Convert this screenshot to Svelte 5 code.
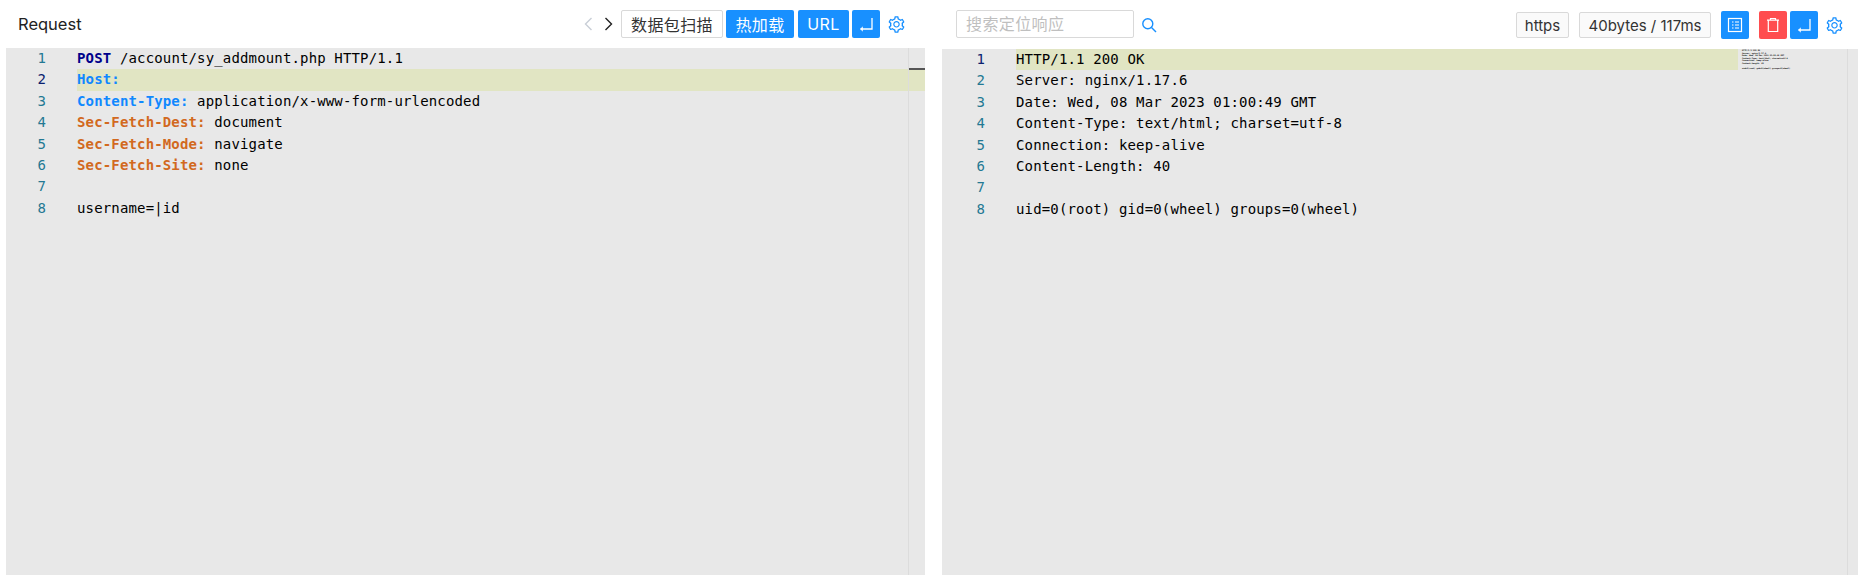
<script>
	const reqLines = [
		[['method', 'POST'], ['', ' /account/sy_addmount.php HTTP/1.1']],
		[['key', 'Host:']],
		[['key', 'Content-Type:'], ['', ' application/x-www-form-urlencoded']],
		[['sec', 'Sec-Fetch-Dest:'], ['', ' document']],
		[['sec', 'Sec-Fetch-Mode:'], ['', ' navigate']],
		[['sec', 'Sec-Fetch-Site:'], ['', ' none']],
		[],
		[['', 'username=|id']]
	];
	const resLines = [
		'HTTP/1.1 200 OK',
		'Server: nginx/1.17.6',
		'Date: Wed, 08 Mar 2023 01:00:49 GMT',
		'Content-Type: text/html; charset=utf-8',
		'Connection: keep-alive',
		'Content-Length: 40',
		'',
		'uid=0(root) gid=0(wheel) groups=0(wheel)'
	];
</script>

{#snippet enterIcon()}
	<svg class="ico" viewBox="0 0 16 16" width="16" height="16" fill="none" stroke="#fff" stroke-width="1.3">
		<path d="M14 2V13H2.5" />
		<path d="M4.8 10.8L2.5 13L4.8 15.2" fill="#fff" stroke-width="0.6" />
	</svg>
{/snippet}

{#snippet gearIcon()}
	<svg viewBox="0 0 1024 1024" width="19" height="19" fill="#1890ff">
		<path d="M924.8 625.7l-65.5-56c3.1-19 4.7-38.4 4.7-57.8s-1.6-38.8-4.7-57.8l65.5-56a32.03 32.03 0 0 0 9.3-35.2l-.9-2.6a443.74 443.74 0 0 0-79.7-137.9l-1.8-2.1a32.12 32.12 0 0 0-35.1-9.5l-81.3 28.9c-30-24.6-63.5-44-99.7-57.6l-15.7-85a32.05 32.05 0 0 0-25.8-25.7l-2.7-.5c-52.1-9.4-106.9-9.4-159 0l-2.7.5a32.05 32.05 0 0 0-25.8 25.7l-15.8 85.4a351.86 351.86 0 0 0-99 57.4l-81.9-29.1a32 32 0 0 0-35.1 9.5l-1.8 2.1a446.02 446.02 0 0 0-79.7 137.9l-.9 2.6c-4.5 12.5-.8 26.5 9.3 35.2l66.3 56.6c-3.1 18.8-4.6 38-4.6 57.1 0 19.2 1.5 38.4 4.6 57.1L99 625.5a32.03 32.03 0 0 0-9.3 35.2l.9 2.6c18.1 50.4 44.9 96.9 79.7 137.9l1.8 2.1a32.12 32.12 0 0 0 35.1 9.5l81.9-29.1c29.8 24.5 63.1 43.9 99 57.4l15.8 85.4a32.05 32.05 0 0 0 25.8 25.7l2.7.5a449.4 449.4 0 0 0 159 0l2.7-.5a32.05 32.05 0 0 0 25.8-25.7l15.7-85a350 350 0 0 0 99.7-57.6l81.3 28.9a32 32 0 0 0 35.1-9.5l1.8-2.1c34.8-41.1 61.6-87.5 79.7-137.9l.9-2.6c4.5-12.3.8-26.3-9.3-35zM788.3 465.9c2.5 15.1 3.8 30.6 3.8 46.1s-1.3 31-3.8 46.1l-6.6 40.1 74.7 63.9a370.03 370.03 0 0 1-42.6 73.6L721 702.8l-31.4 25.8c-23.9 19.6-50.5 35-79.3 45.8l-38.1 14.3-17.9 97a377.5 377.5 0 0 1-85 0l-17.9-97.2-37.8-14.5c-28.5-10.8-55-26.2-78.7-45.7l-31.4-25.9-93.4 33.2c-17-22.9-31.2-47.6-42.6-73.6l75.5-64.5-6.5-40c-2.4-14.9-3.7-30.3-3.7-45.5 0-15.3 1.2-30.6 3.7-45.5l6.5-40-75.5-64.5c11.3-26.1 25.6-50.7 42.6-73.6l93.4 33.2 31.4-25.9c23.7-19.5 50.2-34.9 78.7-45.7l37.9-14.3 17.9-97.2c28.1-3.2 56.8-3.2 85 0l17.9 97 38.1 14.3c28.7 10.8 55.4 26.2 79.3 45.8l31.4 25.8 92.8-32.9c17 22.9 31.2 47.6 42.6 73.6L781.8 426l6.5 39.9zM512 326c-97.2 0-176 78.8-176 176s78.8 176 176 176 176-78.8 176-176-78.8-176-176-176zm79.2 255.2A111.6 111.6 0 0 1 512 614c-29.9 0-58-11.7-79.2-32.8A111.6 111.6 0 0 1 400 502c0-29.9 11.7-58 32.8-79.2C454 401.6 482.1 390 512 390c29.9 0 58 11.6 79.2 32.8A111.6 111.6 0 0 1 624 502c0 29.9-11.7 58-32.8 79.2z" />
	</svg>
{/snippet}

<div class="page">
	<section class="panel">
		<header class="bar">
			<span class="title">Request</span>
			<div class="tools">
				<svg class="chev" viewBox="0 0 12 16" width="12" height="16" fill="none" stroke="#c9ced6" stroke-width="1.4"><path d="M9.5 2L3.5 8L9.5 14" /></svg>
				<svg class="chev next" viewBox="0 0 12 16" width="12" height="16" fill="none" stroke="#222" stroke-width="1.4"><path d="M2.5 2L8.5 8L2.5 14" /></svg>
				<button class="btn plain scan">数据包扫描</button>
				<button class="btn primary hot">热加载</button>
				<button class="btn primary url">URL</button>
				<button class="btn primary square">{@render enterIcon()}</button>
				<span class="gear">{@render gearIcon()}</span>
			</div>
		</header>
		<div class="editor">
			<div class="gutter">
				{#each reqLines as _, i}
					<div class="num" class:active={i === 1}>{i + 1}</div>
				{/each}
			</div>
			<div class="code">
				{#each reqLines as line, i}
					<div class="line" class:hl={i === 1}>{#each line as part}<span class={part[0]}>{part[1]}</span>{/each}</div>
				{/each}
			</div>
			<div class="ruler"><i class="mark"></i></div>
		</div>
	</section>

	<section class="panel right">
		<header class="bar">
			<div class="search">
				<input class="input" placeholder="搜索定位响应" />
				<svg class="lens" viewBox="0 0 16 16" width="16" height="16" fill="none" stroke="#1890ff" stroke-width="1.4"><circle cx="6.8" cy="6.8" r="5" /><path d="M10.5 10.5L15 15" /></svg>
			</div>
			<div class="tools">
				<span class="tag https">https</span>
				<span class="tag size">40bytes / 117ms</span>
				<button class="btn primary square list">
					<svg class="ico" viewBox="0 0 16 16" width="16" height="16" fill="none" stroke="#fff" stroke-width="1.2">
						<rect x="1.5" y="1.5" width="13" height="13" />
						<path d="M5 5H6.5M8 5H12M5 8H6.5M8 8H12M5 11H6.5M8 11H12" />
					</svg>
				</button>
				<button class="btn danger square">
					<svg class="ico" viewBox="0 0 16 16" width="16" height="16" fill="none" stroke="#fff" stroke-width="1.2">
						<path d="M2 3.2H14M5.5 3.2V1.5H10.5V3.2M3.3 3.2V14.5H12.7V3.2" />
					</svg>
				</button>
				<button class="btn primary square">{@render enterIcon()}</button>
				<span class="gear">{@render gearIcon()}</span>
			</div>
		</header>
		<div class="editor">
			<div class="gutter">
				{#each resLines as _, i}
					<div class="num" class:active={i === 0}>{i + 1}</div>
				{/each}
			</div>
			<div class="code">
				{#each resLines as line, i}
					<div class="line" class:hl={i === 0}>{line}</div>
				{/each}
			</div>
			<div class="minimap">
				{#each resLines as line}
					<div class="mini">{line}</div>
				{/each}
			</div>
			<div class="ruler thin"></div>
		</div>
	</section>
</div>

<style>
	:global(body) {
		margin: 0;
		background: #fff;
	}
	.page {
		display: flex;
		height: 585px;
		padding: 0 6px 10px;
		box-sizing: border-box;
		gap: 17px;
		font-family: Inter, "Noto Sans CJK SC", sans-serif;
	}
	.panel {
		flex: 0 0 919px;
		display: flex;
		flex-direction: column;
		min-width: 0;
	}
	.panel.right {
		flex: 0 0 916px;
	}
	.bar {
		height: 48px;
		flex: none;
		display: flex;
		align-items: center;
		justify-content: space-between;
		box-sizing: border-box;
	}
	.right .bar {
		height: 49px;
		padding-top: 1px;
	}
	.title {
		font-size: 16.5px;
		color: #222;
		margin-left: 12px;
	}
	.tools {
		display: flex;
		align-items: center;
		gap: 3px;
	}
	.chev {
		margin-right: 6px;
	}
	.chev.next {
		margin-right: 3px;
	}
	.btn {
		height: 28px;
		box-sizing: border-box;
		border-radius: 2px;
		border: 1px solid transparent;
		padding: 0;
		font-family: inherit;
		font-size: 16px;
		letter-spacing: 0.4px;
		display: inline-flex;
		align-items: center;
		justify-content: center;
	}
	.plain {
		background: #fff;
		border-color: #d9d9d9;
		color: #333;
	}
	.primary {
		background: #1890ff;
		color: #fff;
	}
	.danger {
		background: #ff4d4f;
		color: #fff;
	}
	.scan {
		width: 102px;
	}
	.hot {
		width: 68px;
	}
	.url {
		width: 51px;
		margin-left: 1px;
	}
	.square {
		width: 28px;
	}
	.gear {
		display: inline-flex;
		margin: 0 19px 0 4px;
	}
	.right .gear {
		margin-right: 14px;
	}
	.search {
		display: flex;
		align-items: center;
		gap: 7px;
		margin-left: 14px;
	}
	.input {
		width: 178px;
		height: 28px;
		margin-bottom: 2px;
		box-sizing: border-box;
		border: 1px solid #d9d9d9;
		border-radius: 2px;
		padding: 0 9px;
		font-family: inherit;
		font-size: 16px;
		letter-spacing: 0.4px;
		outline: none;
	}
	.input::placeholder {
		color: #bfbfbf;
	}
	.tag {
		height: 26px;
		box-sizing: border-box;
		border: 1px solid #d9d9d9;
		border-radius: 2px;
		background: #fafafa;
		color: #333;
		font-size: 15px;
		display: inline-flex;
		align-items: center;
		justify-content: center;
	}
	.https {
		width: 53px;
		margin-right: 7px;
	}
	.size {
		width: 132px;
		margin-right: 7px;
	}
	.list {
		margin-right: 7px;
	}
	.editor {
		flex: 1;
		display: flex;
		background: #e8e8e8;
		font-family: "DejaVu Sans Mono", monospace;
		font-size: 14px;
		letter-spacing: 0.15px;
		line-height: 21.4px;
		white-space: pre;
		overflow: hidden;
		position: relative;
	}
	.gutter {
		flex: none;
		width: 71px;
	}
	.right .gutter {
		width: 74px;
	}
	.num {
		width: 40px;
		text-align: right;
		color: #237893;
		height: 21.4px;
	}
	.right .num {
		width: 43px;
	}
	.num.active {
		color: #0b216f;
	}
	.code {
		flex: 1;
		min-width: 0;
		color: #000;
	}
	.line {
		height: 21.4px;
	}
	.line.hl {
		background: #e1e5c3;
	}
	.method {
		color: #00008b;
		font-weight: 700;
	}
	.key {
		color: #1088ff;
		font-weight: 700;
	}
	.sec {
		color: #d2691e;
		font-weight: 700;
	}
	.ruler {
		position: absolute;
		right: 0;
		top: 0;
		bottom: 0;
		width: 16px;
		border-left: 1px solid #dcdcdc;
	}
	.ruler.thin {
		width: 10px;
	}
	.mark {
		display: block;
		margin-top: 20px;
		height: 2px;
		background: #555;
	}
	.minimap {
		flex: none;
		width: 120px;
		font-size: 2px;
		line-height: 2.5px;
		letter-spacing: 0;
		color: #000;
		font-weight: 700;
	}
	.mini {
		height: 2.5px;
		padding-left: 4px;
	}
</style>
